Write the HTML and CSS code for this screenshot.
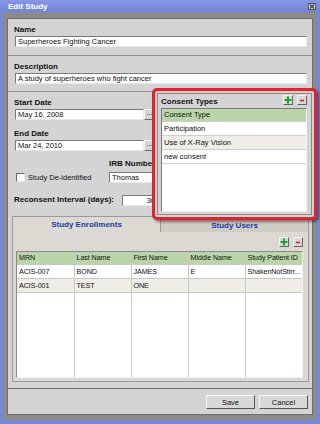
FILE: index.html
```html
<!DOCTYPE html>
<html lang="en">
<head>
    <meta charset="UTF-8">
    <meta name="viewport" content="width=device-width, initial-scale=1.0">
    <title>Edit Study</title>
    <link rel="stylesheet" href="styles.css">
</head>
<body>

<div class="window">
    <div class="titlebar">
        <span class="title">Edit Study</span>
        <span class="close">
            <svg width="6" height="5" viewBox="0 0 6 5"><path d="M1 0.5 L5 4.5 M5 0.5 L1 4.5" stroke="#333" stroke-width="1.1"/></svg>
        </span>
    </div>

    <div class="frame">
        <div class="panel">
            <div class="section">
                <div class="lbl">Name</div>
                <div class="field">Superheroes Fighting Cancer</div>
            </div>

            <div class="section">
                <div class="lbl">Description</div>
                <div class="field">A study of superheroes who fight cancer</div>
            </div>

            <div class="section last">
                <div class="lbl">Start Date</div>
                <div class="date">
                    <div class="field">May 16, 2008</div>
                    <span class="pick">...</span>
                </div>

                <div class="lbl gap">End Date</div>
                <div class="date">
                    <div class="field">Mar 24, 2010</div>
                    <span class="pick">...</span>
                </div>

                <div class="irb-grid">
                    <span></span>
                    <div class="lbl">IRB Number</div>
                    <div class="check"><span class="box"></span>Study De-identified</div>
                    <div class="field irb">Thomas</div>
                </div>

                <div class="reconsent">
                    <div class="lbl">Reconsent Interval (days):</div>
                    <div class="field num">30</div>
                </div>
            </div>

            <div class="tabs">
                <div class="tab-strip">
                    <div class="tab active">Study Enrollments</div>
                    <div class="tab">Study Users</div>
                </div>
                <div class="tab-body">
                    <div class="tools">
                        <span class="mini add"><svg width="8" height="8" viewBox="0 0 8 8"><path d="M4 0.5 V7.5 M0.5 4 H7.5" stroke="#1ca61c" stroke-width="2"/></svg></span>
                        <span class="mini del"><svg width="8" height="8" viewBox="0 0 8 8"><path d="M2 4.5 H6" stroke="#e02424" stroke-width="1.6"/></svg></span>
                    </div>
                    <div class="grid-wrap">
                        <table class="grid">
                            <tr class="head">
                                <td>MRN</td><td>Last Name</td><td>First Name</td><td>Middle Name</td><td>Study Patient ID</td>
                            </tr>
                            <tr class="row">
                                <td>ACIS-007</td><td>BOND</td><td>JAMES</td><td>E</td><td>ShakenNotStirr...</td>
                            </tr>
                            <tr class="row alt">
                                <td>ACIS-001</td><td>TEST</td><td>ONE</td><td></td><td></td>
                            </tr>
                            <tr class="filler">
                                <td></td><td></td><td></td><td></td><td></td>
                            </tr>
                        </table>
                    </div>
                </div>
            </div>

            <div class="footer">
                <button class="btn">Save</button>
                <button class="btn">Cancel</button>
            </div>
        </div>
    </div>

    <!-- highlighted popup over the form -->
    <div class="consent-pop">
        <div class="pop-inner">
            <div class="pop-head">
                <span class="pop-title">Consent Types</span>
                <span class="mini add"><svg width="8" height="8" viewBox="0 0 8 8"><path d="M4 0.5 V7.5 M0.5 4 H7.5" stroke="#1ca61c" stroke-width="2"/></svg></span>
                <span class="mini del"><svg width="8" height="8" viewBox="0 0 8 8"><path d="M2 4.5 H6" stroke="#e02424" stroke-width="1.6"/></svg></span>
            </div>
            <div class="list">
                <div class="item head">Consent Type</div>
                <div class="item">Participation</div>
                <div class="item alt">Use of X-Ray Vision</div>
                <div class="item">new consent</div>
            </div>
        </div>
    </div>
</div>

</body>
</html>
```

FILE: styles.css
```css
* { box-sizing: border-box; }

body {
    margin: 0;
    font-family: "Liberation Sans", Arial, sans-serif;
    font-size: 7.5px;
    color: #111;
}

.window {
    position: relative;
    width: 320px;
    height: 424px;
    background: #7388dc;
    display: flex;
    flex-direction: column;
}

.titlebar {
    height: 12px;
    display: flex;
    align-items: center;
    justify-content: space-between;
    padding: 0 4px 0 8px;
    background: linear-gradient(#8798e4, #7184d8);
}
.title { color: #fff; font-weight: bold; font-size: 8px; }
.close {
    width: 8px;
    height: 7px;
    background: #d8d8d8;
    border: 1px solid #555;
    display: flex;
    align-items: center;
    justify-content: center;
}

.frame {
    flex: 1;
    display: flex;
    margin: 0 3px 4px;
    padding: 6px 4px 5px;
    background: #8b8b8b;
}
.panel {
    flex: 1;
    display: flex;
    flex-direction: column;
    background: #d4d4d4;
    border: 1px solid #6e6e6e;
}

.section {
    padding: 6px 5px 7px 6px;
    border-bottom: 1px solid #8e8e8e;
}
.section:first-child { padding-bottom: 8px; }
.section.last { border-bottom: none; padding-bottom: 0; }

.lbl {
    font-weight: bold;
    font-size: 8px;
    line-height: 10px;
    height: 10px;
    margin-bottom: 1px;
    white-space: nowrap;
}
.lbl.gap { margin-top: 9px; }

.field {
    height: 11px;
    line-height: 9px;
    margin-left: 1px;
    padding: 0 2px;
    background: #fff;
    border: 1px solid;
    border-color: #7a7a7a #e8e8e8 #e8e8e8 #7a7a7a;
    white-space: nowrap;
    overflow: hidden;
}

.date { display: flex; width: 141px; }
.date .field { flex: 1; }
.pick {
    width: 11px;
    height: 11px;
    line-height: 6px;
    text-align: center;
    font-size: 7px;
    background: #d6d6d6;
    border: 1px solid;
    border-color: #f4f4f4 #6a6a6a #6a6a6a #f4f4f4;
}

.irb-grid {
    display: grid;
    grid-template-columns: 95px 100px;
    row-gap: 3px;
    margin-top: 8px;
}
.irb-grid .lbl { margin-bottom: 0; }
.check {
    display: flex;
    align-items: center;
    gap: 3px;
    padding-left: 2px;
}
.box {
    width: 9px;
    height: 9px;
    background: #fff;
    border: 1px solid;
    border-color: #6a6a6a #e8e8e8 #e8e8e8 #6a6a6a;
}
.field.irb { margin-left: 0; }

.reconsent {
    display: flex;
    align-items: center;
    gap: 7px;
    margin-top: 12px;
}
.field.num { width: 37px; text-align: right; padding-right: 3px; }

.tabs {
    margin: 10px 3px 0 4px;
}
.tab-strip { display: flex; height: 16px; }
.tab {
    flex: 1;
    display: flex;
    align-items: center;
    justify-content: center;
    color: #1d3aa6;
    font-weight: bold;
    font-size: 8px;
    background: #d0cdc6;
    border: 1px solid #9a9a9a;
    border-bottom: none;
    margin-top: 2px;
}
.tab.active {
    background: #dcd9d2;
    margin-top: 0;
    border-right: none;
}
.tab-body {
    height: 150px;
    background: #dcd9d2;
    border: 1px solid #9a9a9a;
    border-top: none;
    padding: 5px 5px 3px 3px;
    display: flex;
    flex-direction: column;
}
.tools {
    display: flex;
    justify-content: flex-end;
    gap: 4px;
    margin-bottom: 4px;
}
.mini {
    width: 10px;
    height: 10px;
    display: flex;
    align-items: center;
    justify-content: center;
    background: #d8d8d8;
    border: 1px solid;
    border-color: #f6f6f6 #666 #666 #f6f6f6;
}

.grid-wrap {
    flex: 1;
    background: #fff;
    border: 1px solid;
    border-color: #8a8a8a #f0f0f0 #f0f0f0 #8a8a8a;
    overflow: hidden;
}
.grid {
    width: 100%;
    height: 100%;
    table-layout: fixed;
    border-collapse: collapse;
    font-size: 7.2px;
    letter-spacing: -0.1px;
}
.grid td {
    padding: 0 1px 0 2px;
    border-right: 1px solid #c8c8c8;
    border-bottom: 1px solid #c8c8c8;
    white-space: nowrap;
    overflow: hidden;
}
.grid td:last-child { border-right: none; }
.grid .head td { height: 12px; background: #b9d7a6; }
.grid .row td { height: 14px; }
.grid .alt td { background: #eeeee7; }
.grid .filler td { border-bottom: none; }

.footer {
    margin-top: auto;
    border-top: 1px solid #6e6e6e;
    display: flex;
    justify-content: flex-end;
    gap: 4px;
    padding: 6px 4px 5px;
}
.btn {
    width: 49px;
    height: 14px;
    padding: 0;
    font-family: "Liberation Sans", Arial, sans-serif;
    font-size: 7.5px;
    color: #111;
    background: #d8d8d8;
    border: 1px solid;
    border-color: #f6f6f6 #555 #555 #f6f6f6;
}

.consent-pop {
    position: absolute;
    left: 152px;
    top: 88px;
    width: 165px;
    height: 132px;
    padding: 2px;
    background: #d2d2d2;
    border: 3px solid #e3222b;
    border-radius: 5px;
    box-shadow: 2px 2px 3px rgba(0,0,0,0.45);
}
.pop-inner {
    height: 100%;
    border: 1px solid #8a8a8a;
    background: #d4d4d4;
    padding: 1px 4px 2px 3px;
    display: flex;
    flex-direction: column;
}
.pop-head {
    display: flex;
    align-items: center;
    gap: 4px;
    height: 10px;
    margin-bottom: 3px;
}
.pop-title {
    flex: 1;
    font-weight: bold;
    font-size: 8px;
    padding-top: 3px;
}
.list {
    flex: 1;
    background: #fff;
    border: 1px solid;
    border-color: #7a7a7a #f0f0f0 #f0f0f0 #7a7a7a;
}
.item {
    height: 14px;
    line-height: 13px;
    padding: 0 2px;
    border-bottom: 1px solid #cfcfcf;
}
.item.head { height: 13px; line-height: 12px; background: #b9d7a6; }
.item.alt { background: #eeeee7; }
```
